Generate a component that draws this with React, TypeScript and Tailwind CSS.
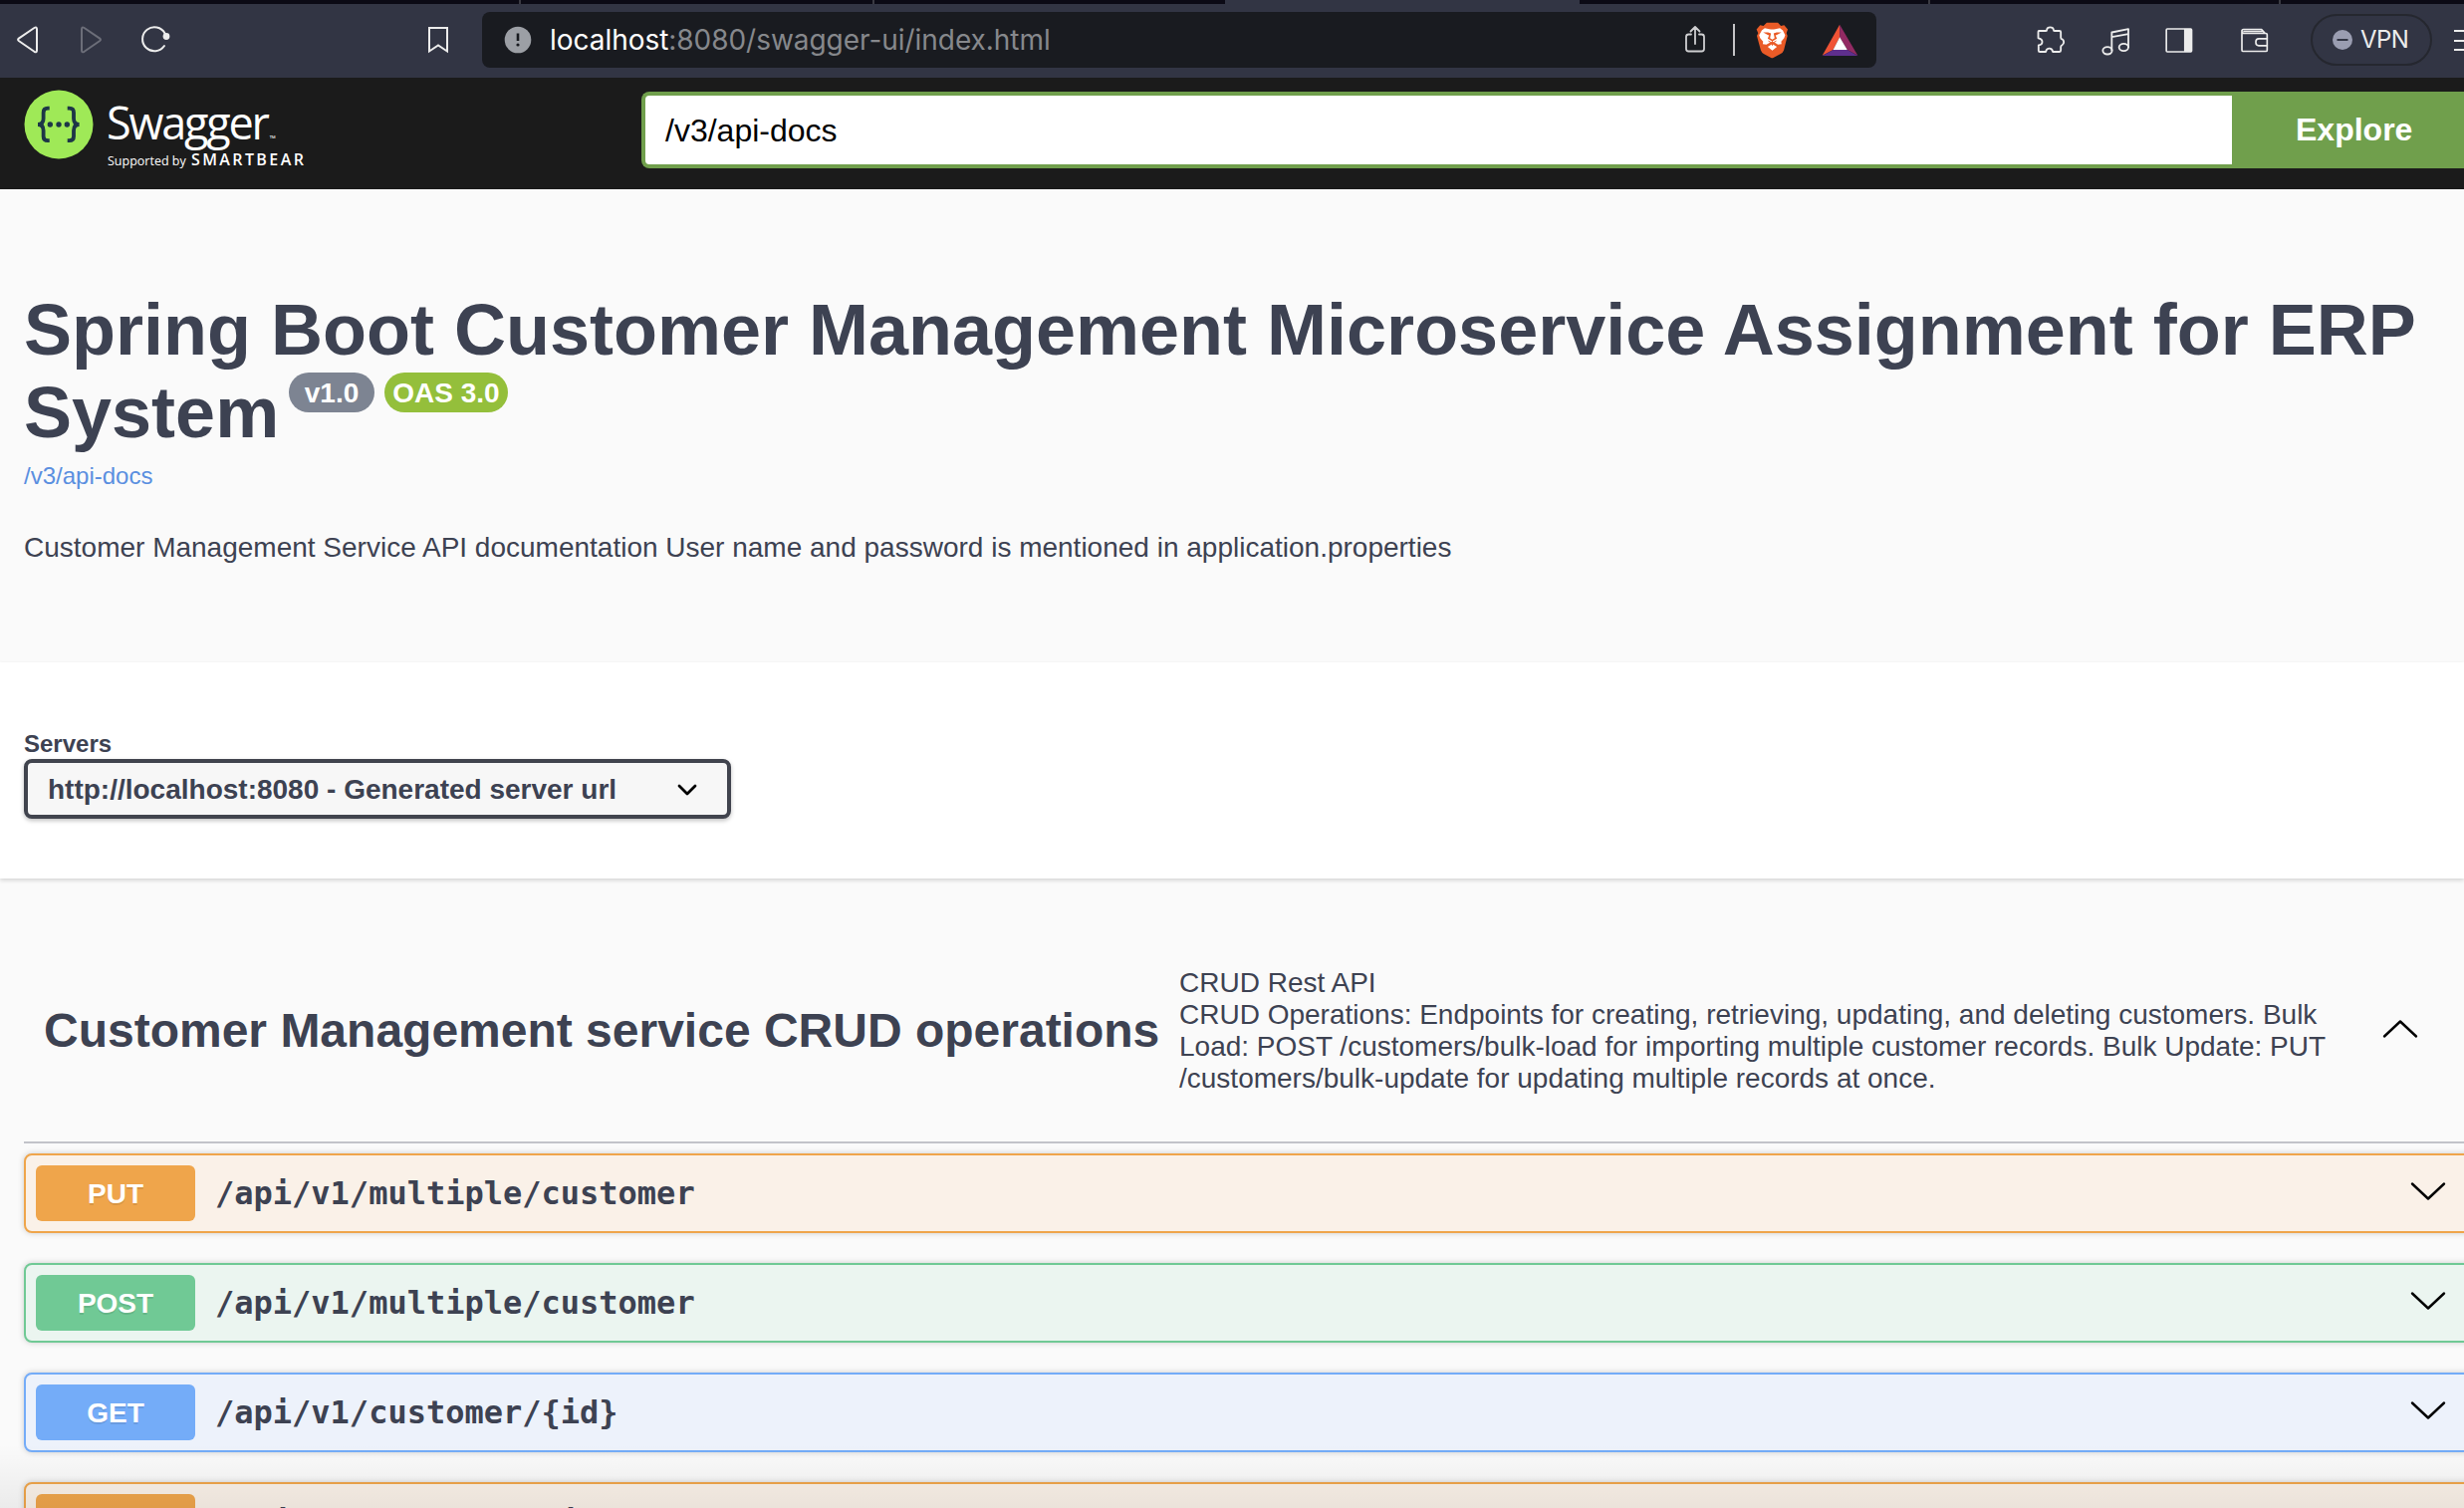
import type { ReactNode } from "react";

const SANS = "font-['Liberation_Sans',Arial,sans-serif]";
const line = { fill: "none", stroke: "currentColor", strokeLinejoin: "round", strokeLinecap: "round" } as const;

function Icon({ box, className, children }: { box: string; className: string; children: ReactNode }) {
  return (
    <svg viewBox={box} className={`shrink-0 ${className}`}>
      {children}
    </svg>
  );
}

function TabStrip() {
  return (
    <div className="flex h-1 bg-[#0b0a15]">
      <div className="w-[523px] border-r-2 border-[#3a3a42]" />
      <div className="w-[355px] border-r-2 border-[#3a3a42]" />
      <div className="w-[352px]" />
      <div className="w-[356px] bg-[#323544]" />
      <div className="w-[352px] border-r-2 border-[#3a3a42]" />
      <div className="w-[352px] border-r-2 border-[#3a3a42]" />
    </div>
  );
}

function BrowserBar() {
  return (
    <div className="flex h-[74px] items-start overflow-hidden bg-[#323544] pt-2 text-[#ececec]">
      <Icon box="0 0 28 34" className="ml-[14px] mt-[11px] h-[34px] w-7">
        <path {...line} strokeWidth="2" d="M20.4 5 4.8 15.600Q3.300 16.800 4.800 18L20.400 28.800Q23 30.300 23 27.500V6.300Q23 3.500 20.400 5Z" />
      </Icon>
      <Icon box="0 0 28 34" className="ml-[35px] mt-[11px] h-[34px] w-7 text-[#6c6e79]">
        <path {...line} strokeWidth="2" d="M7.600 5 23.200 15.600Q24.700 16.800 23.200 18L7.600 28.800Q5 30.300 5 27.500V6.300Q5 3.500 7.600 5Z" />
      </Icon>
      <Icon box="0 0 34 34" className="ml-[35px] mt-[10px] h-[34px] w-[34px]">
        <path {...line} strokeWidth="2" d="M25.600 11.500A12 12 0 1 0 25 24" />
        <circle cx="27" cy="14.500" r="3.400" fill="currentColor" />
      </Icon>
      <Icon box="0 0 24 32" className="ml-[254px] mt-[12px] h-8 w-6">
        <path {...line} strokeLinejoin="miter" strokeWidth="2" d="M3 4H21V27.500L12 21.500 3 27.500Z" />
      </Icon>

      <div className="ml-8 flex h-14 w-[1400px] shrink-0 items-center rounded-lg bg-[#191b20]">
        <Icon box="0 0 28 28" className="ml-[22px] h-7 w-7">
          <circle cx="14" cy="14" r="13.300" fill="#9c9fa5" />
          <path d="M14 7.500V15" stroke="#191b20" strokeWidth="2.600" />
          <circle cx="14" cy="19" r="1.600" fill="#191b20" />
        </Icon>
        <div className="ml-[18px] w-[1130px] whitespace-nowrap font-['Inter',sans-serif] text-[28px] leading-8 tracking-[-0.04px] text-[#86888c]">
          <span className="text-white">localhost</span>:8080/swagger-ui/index.html
        </div>
        <Icon box="0 0 28 34" className="ml-[6px] h-[34px] w-7 text-[#cfcfd1]">
          <path {...line} strokeWidth="1.800" d="M10 11.500H7.500Q5 11.500 5 14V26Q5 28.500 7.500 28.500H20.500Q23 28.500 23 26V14Q23 11.500 20.500 11.500H18M14 21V4.500M9.500 8.500 14 4 18.500 8.500" />
        </Icon>
        <div className="ml-[24px] h-8 w-[2px] bg-[#c4c4c6]" />
        <Icon box="310 64 100 112" className="ml-[21px] h-[37px] w-[33px]">
          <path
            fill="#ea5b27"
            d="M343 66H377L386 76 396 74 407 87 403 98 406 106 395 150Q392 158 384 162L363 173Q360 175 356 173L335 162Q328 158 325 150L313 106 317 98 312 87 323 74 333 76Z"
          />
          <path
            fill="#fff"
            d="M337 83 351 86Q360 88 369 86L383 83 392 90 399 104 396 113 387 124 388 131 377 133 370 128 360 124 350 128 342 133 331 131 332 124 323 113 320 104 328 90Z"
          />
          <path fill="#fff" d="M346 140 357 133Q360 131 363 133L374 140 360 151Z" />
          <path fill="#ea5b27" d="M332 96 347 96 356 99 353 113 360 118 367 113 364 99 373 96 388 96 374 103 370 105 374 115 360 123 346 115 350 105 346 103Z" />
          <path fill="none" stroke="#ea5b27" strokeWidth="3" d="M348 122 360 129 372 122M360 122V136" />
        </Icon>
        <Icon box="508 68 112 100" className="ml-[33px] h-[33px] w-[37px]">
          <path fill="#f05335" d="M563 70V108L543 147 510 164Z" />
          <path fill="#922a63" d="M563 70 618 164 586 147 563 108Z" />
          <path fill="#5e2f8d" d="M510 165 543 147H586L618 165Z" />
          <path fill="#fff" d="M563 108 586 147H543Z" />
        </Icon>
      </div>

      <Icon box="74 76 92 90" className="ml-[160px] mt-[13px] h-[30px] w-[31px]">
        <path
          {...line}
          strokeWidth="5.500"
          d="M83 94H104Q107 94 107 90Q108 83 117 83Q126 83 127 90Q127 94 130 94H145Q149 94 149 98V114Q149 118 153 119Q158 122 158 128Q158 134 153 137Q149 138 149 142V152Q149 157 145 157H125Q123 146 113 147Q105 148 104 157H86Q82 157 82 153V137Q93 136 93 127Q93 118 81 116V97Q81 94 83 94Z"
        />
      </Icon>
      <Icon box="268 80 90 86" className="ml-[34px] mt-[15px] h-[29px] w-[30px]">
        <g {...line} strokeWidth="5.500">
          <path d="M302 150V96L352 86V140M302 110 352 101" />
          <ellipse cx="289" cy="151" rx="14" ry="11" />
          <ellipse cx="338" cy="141" rx="14" ry="11" />
        </g>
      </Icon>
      <Icon box="460 80 90 82" className="ml-[34px] mt-[15px] h-[27px] w-[30px]">
        <rect {...line} strokeWidth="5" x="466" y="86" width="77" height="70" rx="3" />
        <rect fill="currentColor" x="520" y="86" width="24" height="70" />
      </Icon>
      <Icon box="688 80 90 80" className="ml-[46px] mt-[15px] h-[27px] w-[30px]">
        <g {...line} strokeWidth="5">
          <path d="M694 90V149Q694 153 698 153H766Q770 153 770 149V103Q770 99 766 99H700Q694 98 694 92Q694 87 699 87H753L762 97M700 93H755" />
          <path d="M770 115H745Q736 115 736 124V127Q736 136 745 136H770" />
        </g>
      </Icon>
      <div className="ml-[41px] mt-[2px] flex h-[52px] w-[122px] shrink-0 items-center rounded-full border-2 border-[#25272f]">
        <Icon box="0 0 20 20" className="ml-5 h-5 w-5">
          <circle cx="10" cy="10" r="10" fill="#9a9db1" />
          <path d="M4.500 10H15.500" stroke="#323544" strokeWidth="2" />
        </Icon>
        <span className="ml-2 font-['Inter',sans-serif] text-2xl leading-8 tracking-[-0.6px] text-[#ececec]">VPN</span>
      </div>
      <div className="ml-[22px] mt-[18px] flex w-[26px] shrink-0 flex-col gap-[7.500px]">
        <div className="h-[2px] bg-[#ececec]" />
        <div className="h-[2px] bg-[#ececec]" />
        <div className="h-[2px] bg-[#ececec]" />
      </div>
    </div>
  );
}

function SwaggerLogo() {
  return (
    <div className="flex w-[620px] shrink-0 items-start">
      <Icon box="0 0 70 70" className="mt-[-2px] h-[70px] w-[70px]">
        <circle cx="35" cy="35" r="34.500" fill="#9fe957" />
        <g fill="none" stroke="#1d3647" strokeWidth="3.800">
          <path d="M25.700 18.700H24Q19.600 18.700 19.600 23V29Q19.600 35 14 35Q19.600 35 19.600 41V47Q19.600 51.200 24 51.200H25.700" />
          <path d="M43.700 18.700H45.500Q50 18.700 50 23V29Q50 35 55.600 35Q50 35 50 41V47Q50 51.200 45.500 51.200H43.700" />
        </g>
        <g fill="#1d3647">
          <circle cx="26.300" cy="35" r="2.700" />
          <circle cx="35" cy="35" r="2.700" />
          <circle cx="43.300" cy="35" r="2.700" />
        </g>
      </Icon>
      <div className="ml-[13px] flex flex-col whitespace-nowrap font-['Open_Sans',sans-serif] text-white">
        <div className="flex h-[61px] items-end">
          <span className="text-[45px] leading-[60px] tracking-[-2.2px]">Swagger</span>
          <span className="mb-[10px] ml-[2px] text-[8px] leading-[8px]">™</span>
        </div>
        <div className="-mt-[3px] flex items-baseline leading-5">
          <span className="w-[85px] pl-px text-[12.500px]">Supported by</span>
          <span className="text-[16px] font-semibold tracking-[2.4px]">SMARTBEAR</span>
        </div>
      </div>
    </div>
  );
}

function TopBar() {
  return (
    <div className="flex h-[112px] items-start bg-[#1b1b1b] pl-6 pt-[14px]">
      <SwaggerLogo />
      <div className="flex h-[77px] flex-1 items-center rounded-l-lg border-4 border-r-0 border-[#709f4c] bg-white pl-5 text-[32px] text-black">/v3/api-docs</div>
      <div className="flex h-[77px] w-[233px] shrink-0 items-center bg-[#709f4c] pb-px pl-16 text-[32px] font-bold text-white">Explore</div>
    </div>
  );
}

function Info() {
  return (
    <div className="h-[475px] whitespace-nowrap bg-[#fafafa] pl-6 pt-[100px]">
      <h1 className="text-[72px] font-bold leading-[83px]">
        <div>Spring Boot Customer Management Microservice Assignment for ERP</div>
        <div className="flex h-[83px] items-start">
          <span className="w-[266px]">System</span>
          <span className="mt-[1px] flex h-10 w-[86px] items-center justify-center rounded-[20px] bg-[#7d8492] pt-px text-[28px] leading-8 text-white">v1.0</span>
          <span className="ml-[10px] mt-[1px] flex h-10 w-[124px] items-center justify-center rounded-[20px] bg-[#94bf3b] pt-px text-[28px] leading-8 text-white">OAS 3.0</span>
        </div>
      </h1>
      <a className="mt-2 block text-2xl leading-7 text-[#5a8fe0]">/v3/api-docs</a>
      <p className="mt-[42px] text-[28px] leading-8">Customer Management Service API documentation User name and password is mentioned in application.properties</p>
    </div>
  );
}

function Servers() {
  return (
    <div className="relative h-[217px] bg-white pl-6 pt-[67px] shadow-[0_2px_4px_rgba(0,0,0,0.15)]">
      <div className="text-2xl font-bold leading-[30px]">Servers</div>
      <div className="flex h-[60px] w-[710px] items-center justify-between rounded-lg border-4 border-[#41444e] bg-[#f7f7f7] pl-5 pr-[29px] pt-px text-[28px] font-bold shadow-[0_2px_4px_rgba(0,0,0,0.25)]">
        <span>http://localhost:8080 - Generated server url</span>
        <Icon box="0 0 22 14" className="h-[14px] w-[22px] text-black">
          <path {...line} strokeWidth="2.800" d="M3 3 11 11 19 3" />
        </Icon>
      </div>
    </div>
  );
}

const tones = {
  PUT: { row: "border-[#efa54b] bg-[#faf1e8]", badge: "bg-[#efa54b]" },
  POST: { row: "border-[#70c995] bg-[#ebf5f0]", badge: "bg-[#70c995]" },
  GET: { row: "border-[#74acf8] bg-[#edf2fb]", badge: "bg-[#74acf8]" },
};

const operations: { method: keyof typeof tones; path: string }[] = [
  { method: "PUT", path: "/api/v1/multiple/customer" },
  { method: "POST", path: "/api/v1/multiple/customer" },
  { method: "GET", path: "/api/v1/customer/{id}" },
  { method: "PUT", path: "/api/v1/customer/{id}" },
];

function Operation({ method, path }: { method: keyof typeof tones; path: string }) {
  return (
    <div className={`mb-[30px] mr-[-10px] flex h-20 items-center rounded-lg border-2 pl-[10px] pr-[26px] shadow-[0_0_6px_rgba(0,0,0,0.19)] ${tones[method].row}`}>
      <span className={`flex h-14 w-40 items-center justify-center rounded-md pt-px text-[28px] font-bold text-white [text-shadow:0_2px_0_rgba(0,0,0,0.1)] ${tones[method].badge}`}>{method}</span>
      <span className="ml-5 flex-1 font-['DejaVu_Sans_Mono',monospace] text-[32px] font-bold leading-10">{path}</span>
      <Icon box="0 0 36 20" className="mb-[5px] h-5 w-9 text-black">
        <path {...line} strokeWidth="2.400" d="M2 2.500 18 17.500 34 2.500" />
      </Icon>
    </div>
  );
}

export default function App() {
  return (
    <div className={`relative h-[1514px] w-full overflow-hidden bg-[#fafafa] text-[#3d4252] ${SANS}`}>
      <TabStrip />
      <BrowserBar />
      <TopBar />
      <Info />
      <Servers />
      <div className="pl-6">
        <div className="flex h-[266px] items-center border-b-2 border-[#c2c3c9] pl-5 pt-[42px]">
          <h2 className="w-[1140px] shrink-0 whitespace-nowrap text-[48px] font-bold leading-[56px]">Customer Management service CRUD operations</h2>
          <p className="w-[1208px] shrink-0 whitespace-nowrap text-[28px] leading-8">
            CRUD Rest API
            <br />
            CRUD Operations: Endpoints for creating, retrieving, updating, and deleting customers. Bulk
            <br />
            Load: POST /customers/bulk-load for importing multiple customer records. Bulk Update: PUT
            <br />
            /customers/bulk-update for updating multiple records at once.
          </p>
          <Icon box="0 0 36 20" className="mb-1 h-5 w-9 text-black">
            <path {...line} strokeWidth="2.400" d="M2 17.500 18 2.500 34 17.500" />
          </Icon>
        </div>
        <div className="pt-[10px]">
          {operations.map((op, i) => (
            <Operation key={i} {...op} />
          ))}
        </div>
      </div>
      <div className="absolute inset-x-0 bottom-0 h-16 bg-linear-to-b from-transparent to-black/6" />
    </div>
  );
}
